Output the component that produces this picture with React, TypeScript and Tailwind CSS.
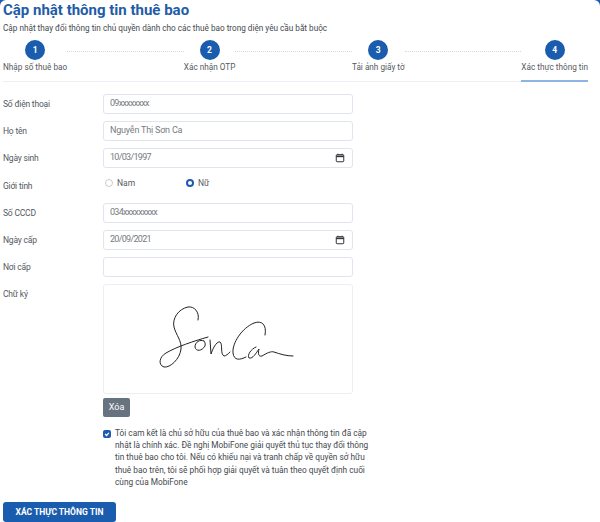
import React from 'react';

const STEPS = ['Nhập số thuê bao', 'Xác nhận OTP', 'Tải ảnh giấy tờ', 'Xác thực thông tin'];

const CalendarIcon = () => (
  <svg className="w-[10px] h-[10px] text-[#333]" viewBox="0 0 12 12" fill="none" stroke="currentColor">
    <rect x="1.5" y="2" width="9" height="8.5" rx="1" strokeWidth="1.2" />
    <path d="M1.5 4h9" strokeWidth="2" />
    <path d="M3.5 .8v1.6M8.5 .8v1.6" strokeWidth="1" />
  </svg>
);

const Field: React.FC<{ label: string; value?: string; calendar?: boolean; tight?: boolean }> = ({ label, value, calendar, tight }) => (
  <div className="flex items-center h-5 mb-[7px]">
    <div className="w-[100px] text-[8.5px] tracking-[-0.2px] text-[#55595e]">{label}</div>
    <div className="w-[250px] h-5 bg-white border border-[#e0e4ee] rounded-[3px] pl-[6px] pr-[7px] flex items-center justify-between text-[9px] text-[#777b80]">
      <span className={tight ? 'tracking-[-0.7px]' : 'tracking-[-0.2px]'}>{value}</span>
      {calendar && <CalendarIcon />}
    </div>
  </div>
);

export default function App() {
  return (
    <div className="w-[600px] h-[522px] bg-[#1a5cae] overflow-hidden font-['Roboto',sans-serif]">
      <div className="h-full bg-white rounded-t-[6px] pl-[3px] pr-[12px]">
        <h1 className="text-[15px] leading-[18px] pt-[1px] font-bold text-[#1f5ca8]">Cập nhật thông tin thuê bao</h1>
        <p className="text-[8.2px] leading-[12px] mt-[3px] text-[#44494e]">
          Cập nhật thay đổi thông tin chủ quyền dành cho các thuê bao trong diện yêu cầu bắt buộc
        </p>

        <div className="flex border-b border-[#eef0f5] mt-[6px] h-[42px]">
          {STEPS.map((step, i) => (
            <React.Fragment key={step}>
              {i > 0 && <div className="flex-1 h-0 mt-[11px] border-t border-dotted border-[#d5d8dc]" />}
              <div className={`flex flex-col items-center h-[42px] ${i === 3 ? 'border-b-2 border-[#8db4e2]' : ''}`}>
                <div className="w-[20px] h-[20px] rounded-full bg-[#1a5cae] text-white text-[8.5px] font-bold flex items-center justify-center">
                  {i + 1}
                </div>
                <div className="text-[8.2px] leading-[12px] mt-[1px] whitespace-nowrap text-[#55595e]">{step}</div>
              </div>
            </React.Fragment>
          ))}
        </div>

        <div className="mt-[12px]">
          <Field label="Số điện thoại" value="09xxxxxxxx" tight />
          <Field label="Họ tên" value="Nguyễn Thị Sơn Ca" />
          <Field label="Ngày sinh" value="10/03/1997" calendar tight />

          <div className="flex h-[28px]">
            <div className="w-[100px] text-[8.5px] tracking-[-0.2px] text-[#55595e] pt-[5px]">Giới tính</div>
            <div className="flex items-start pt-[2px] text-[8.5px] leading-[12px] text-[#55595e]">
              <span className="w-[8px] h-[8px] mt-[2px] ml-[2px] rounded-full border border-[#c8ccd0] bg-white" />
              <span className="ml-[4px] w-[69px]">Nam</span>
              <span className="w-[8px] h-[8px] mt-[2px] rounded-full border-[2.5px] border-[#1f5ab0] bg-white" />
              <span className="ml-[4px]">Nữ</span>
            </div>
          </div>

          <Field label="Số CCCD" value="034xxxxxxxxx" tight />
          <Field label="Ngày cấp" value="20/09/2021" calendar tight />
          <Field label="Nơi cấp" />

          <div className="flex">
            <div className="w-[100px] text-[8.5px] tracking-[-0.2px] text-[#55595e] pt-[4px]">Chữ ký</div>
            <div className="w-[250px]">
              <div className="h-[110px] border border-[#eceef2] rounded-[3px]">
                <svg className="w-[248px] h-[108px]" viewBox="0 0 248 108" fill="none" stroke="#222" strokeWidth="1" strokeLinecap="round" strokeLinejoin="round">
                  <path d="M94 35C96 27 90 21 84 22C74 24 68 34 70 42C72 50 78 56 77 64C76 74 66 83 60 82C54 80 55 72 62 68C72 62 90 56 104 52" />
                  <path d="M100 56C96 54 91 57 91 62C92 67 98 66 101 61C102 58 100 56 100 56" />
                  <path d="M106 55L107 69C110 60 114 56 116 57C119 59 116 69 120 71C122 71 124 69 126 67" />
                  <path d="M161 50C163 40 158 35 150 38C138 43 128 58 129 68C130 76 136 75 142 72" />
                  <path d="M152 62C147 64 143 70 145 73C149 74 152 68 155 64C154 68 154 72 158 71C163 68 167 66 170 67C176 69 182 71 189 71" />
                </svg>
              </div>
              <button className="block mt-[4px] w-[27px] h-[19px] bg-[#687380] rounded-[2px] text-white text-[9px]">Xóa</button>
              <div className="flex mt-[10px] w-[270px]">
                <span className="shrink-0 w-[8px] h-[8px] mt-[3px] rounded-[2px] bg-[#1f5ab0] flex items-center justify-center">
                  <svg className="w-[6px] h-[6px]" viewBox="0 0 8 8" fill="none" stroke="#fff" strokeWidth="1.6">
                    <path d="M1.5 4l2 2 3-3.5" />
                  </svg>
                </span>
                <p className="ml-[4px] text-[8.3px] leading-[12.2px] whitespace-nowrap text-[#44494e]">
                  Tôi cam kết là chủ sở hữu của thuê bao và xác nhận thông tin đã cập<br />
                  nhật là chính xác. Đề nghị MobiFone giải quyết thủ tục thay đổi thông<br />
                  tin thuê bao cho tôi. Nếu có khiếu nại và tranh chấp về quyền sở hữu<br />
                  thuê bao trên, tôi sẽ phối hợp giải quyết và tuân theo quyết định cuối<br />
                  cùng của MobiFone
                </p>
              </div>
            </div>
          </div>

          <button className="block mt-[14px] w-[113px] h-[20px] bg-[#1a5cae] rounded-[3px] text-white text-[8.5px] font-bold">
            XÁC THỰC THÔNG TIN
          </button>
        </div>
      </div>
    </div>
  );
}
